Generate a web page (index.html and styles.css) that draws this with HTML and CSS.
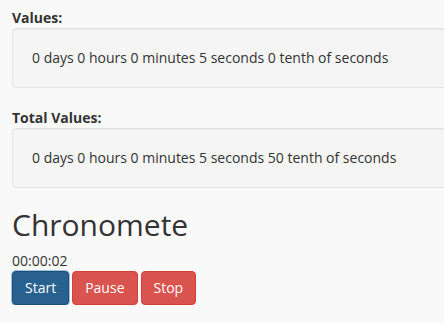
FILE: index.html
```html
<!DOCTYPE html>
<html lang="en">
<head>
    <meta charset="UTF-8">
    <title>Chronometer</title>
    <link rel="stylesheet" href="styles.css">
</head>
<body>
    <div class="container">
        <label class="field-label">Values:</label>
        <div class="well">0 days 0 hours 0 minutes 5 seconds 0 tenth of seconds</div>

        <label class="field-label">Total Values:</label>
        <div class="well">0 days 0 hours 0 minutes 5 seconds 50 tenth of seconds</div>

        <h1 class="title">Chronomete</h1>
        <div class="time">00:00:02</div>
        <div class="buttons">
            <button class="btn btn-primary active">Start</button>
            <button class="btn btn-danger">Pause</button>
            <button class="btn btn-danger">Stop</button>
        </div>
    </div>
</body>
</html>
```

FILE: styles.css
```css
* {
    box-sizing: border-box;
}

html, body {
    margin: 0;
    background-color: #f9f9f9;
    color: #333333;
    font-family: "Open Sans", "Liberation Sans", sans-serif;
    font-size: 14px;
    line-height: 20px;
}

.container {
    padding: 8px 0 0 12px;
    overflow: hidden;
}

.field-label {
    display: block;
    font-weight: bold;
}

.well {
    width: 460px;
    min-height: 20px;
    padding: 19px;
    margin-bottom: 20px;
    background-color: #f5f5f5;
    border: 1px solid #e3e3e3;
    border-radius: 4px;
    box-shadow: inset 0 1px 1px rgba(0, 0, 0, .05);
    white-space: nowrap;
}

.title {
    margin: 20px 0 10px;
    font-size: 30px;
    font-weight: 500;
    line-height: 33px;
}

.buttons {
    display: flex;
    gap: 3px;
}

.btn {
    padding: 6px 12px;
    font-family: inherit;
    font-size: 14px;
    line-height: 20px;
    color: #ffffff;
    border: 1px solid transparent;
    border-radius: 4px;
    cursor: pointer;
}

.btn-primary {
    background-color: #337ab7;
    border-color: #2e6da4;
}

.btn-primary.active {
    background-color: #286090;
    border-color: #204d74;
    box-shadow: 0 0 0 1px #9cc3ea;
}

.btn-danger {
    background-color: #d9534f;
    border-color: #d43f3a;
}
```
